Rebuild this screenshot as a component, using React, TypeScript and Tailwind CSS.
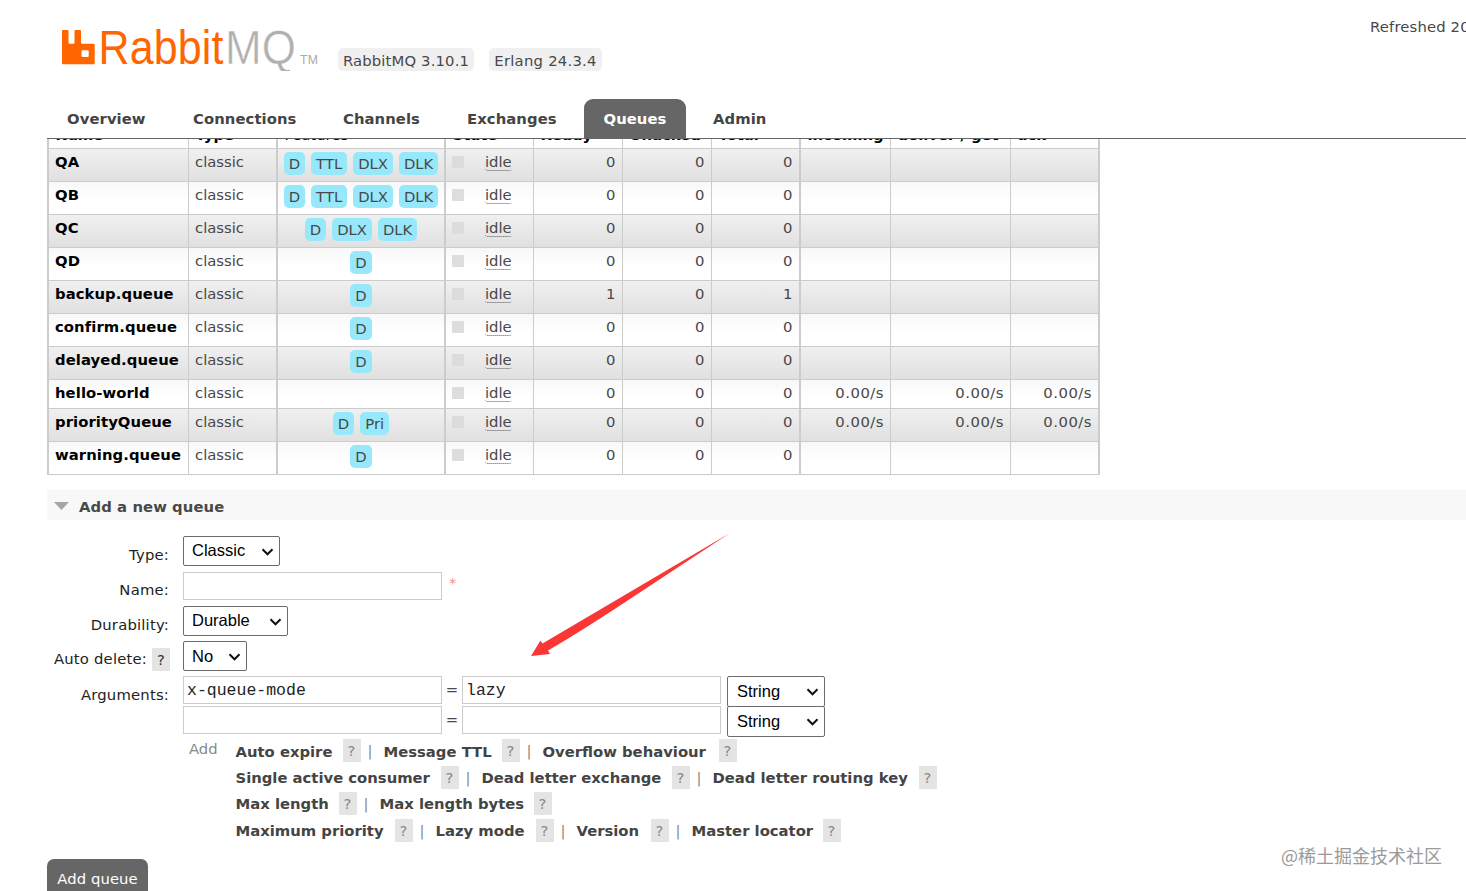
import React from "react";
import clsx from "clsx";

type Queue = { name: string; tags: string[]; ready: number; total: number; rates?: boolean; short?: boolean };

const queues: Queue[] = [
  { name: "QA", tags: ["D", "TTL", "DLX", "DLK"], ready: 0, total: 0 },
  { name: "QB", tags: ["D", "TTL", "DLX", "DLK"], ready: 0, total: 0 },
  { name: "QC", tags: ["D", "DLX", "DLK"], ready: 0, total: 0 },
  { name: "QD", tags: ["D"], ready: 0, total: 0 },
  { name: "backup.queue", tags: ["D"], ready: 1, total: 1 },
  { name: "confirm.queue", tags: ["D"], ready: 0, total: 0 },
  { name: "delayed.queue", tags: ["D"], ready: 0, total: 0 },
  { name: "hello-world", tags: [], ready: 0, total: 0, rates: true, short: true },
  { name: "priorityQueue", tags: ["D", "Pri"], ready: 0, total: 0, rates: true },
  { name: "warning.queue", tags: ["D"], ready: 0, total: 0 },
];

const columns = [
  { label: "Name", thick: true },
  { label: "Type" },
  { label: "Features", thick: true, plain: true },
  { label: "State", thick: true },
  { label: "Ready" },
  { label: "Unacked" },
  { label: "Total" },
  { label: "incoming", thick: true },
  { label: "deliver / get" },
  { label: "ack" },
];

const gridCols = "grid w-[1053px] grid-cols-[141px_88px_168px_89px_89px_89px_88px_91px_120px_90px]";

const options = [
  [
    { label: "Auto expire", w: "w-[107px]" },
    { label: "Message TTL", w: "w-[118px]" },
    { label: "Overflow behaviour", w: "w-[176px]" },
  ],
  [
    { label: "Single active consumer", w: "w-[205px]" },
    { label: "Dead letter exchange", w: "w-[190px]" },
    { label: "Dead letter routing key", w: "w-[206px]" },
  ],
  [
    { label: "Max length", w: "w-[103px]" },
    { label: "Max length bytes", w: "w-[154px]" },
  ],
  [
    { label: "Maximum priority", w: "w-[159px]" },
    { label: "Lazy mode", w: "w-[100px]" },
    { label: "Version", w: "w-[74px]" },
    { label: "Master locator", w: "w-[131px]" },
  ],
];

const tabs = [
  { label: "Overview", w: "w-[126px]" },
  { label: "Connections", w: "w-[150px]" },
  { label: "Channels", w: "w-[124px]" },
  { label: "Exchanges", w: "w-[137px]" },
  { label: "Queues", w: "w-[102px]", active: true },
  { label: "Admin", w: "w-[110px]" },
];

function Logo() {
  return (
    <svg width="262" height="46" viewBox="0 0 262 46" className="block">
      <path
        fill="#ff6600"
        d="M2 6a1 1 0 0 1 1-1h4.500a1 1 0 0 1 1 1v11.500a1.200 1.200 0 0 0 1.200 1.200h3.600a1.200 1.200 0 0 0 1.200-1.200V6a1 1 0 0 1 1-1h4.500a1 1 0 0 1 1 1v11.500a1.200 1.200 0 0 0 1.200 1.200H33.500a1.200 1.200 0 0 1 1.200 1.200V38a1.200 1.200 0 0 1-1.200 1.200H3.200A1.200 1.200 0 0 1 2 38zM22.500 25.300a1 1 0 0 0-1 1v4.800a1 1 0 0 0 1 1h5.200a1 1 0 0 0 1-1v-4.800a1 1 0 0 0-1-1z"
        fillRule="evenodd"
      />
      <g className="font-['Liberation_Sans',sans-serif]">
        <text x="38.500" y="39" fontSize="47.500" fill="#ff6600" textLength="125" lengthAdjust="spacingAndGlyphs">Rabbit</text>
        <text x="165" y="39" fontSize="48.500" fill="#b0b0b0" stroke="#ffffff" strokeWidth="0.500" textLength="71" lengthAdjust="spacingAndGlyphs">MQ</text>
        <text x="240" y="39" fontSize="12.500" fill="#aaaaaa" textLength="18" lengthAdjust="spacingAndGlyphs">TM</text>
      </g>
    </svg>
  );
}

function Select({ value, className }: { value: string; className: string }) {
  return (
    <div className={clsx("flex shrink-0 justify-between rounded-[2px] border border-[#6b6b6b] bg-white pr-[5px] font-['Liberation_Sans',sans-serif] text-[16.500px] text-black", className)}>
      <span>{value}</span>
      <svg width="13" height="8" viewBox="0 0 13 8" className="mt-[11px]">
        <path d="M1.500 1.300 6.500 6.300l5-5" fill="none" stroke="#111" strokeWidth="2" />
      </svg>
    </div>
  );
}

function Field({ value = "" }: { value?: string }) {
  return (
    <div className="h-7 w-[259px] shrink-0 border border-[#cccccc] bg-white pl-[3px] font-['Liberation_Mono',monospace] text-[16.500px] leading-[28px] text-[#222]">
      {value}
    </div>
  );
}

function Help({ dark = false }: { dark?: boolean }) {
  return (
    <span className={clsx("h-[23px] w-[18px] shrink-0 bg-[#e4e4e4] text-center", dark ? "leading-[23px] text-[#333]" : "leading-[24px] text-[#888]")}>?</span>
  );
}

function Label({ text, help = false }: { text: string; help?: boolean }) {
  return (
    <div className={clsx("flex w-[123px] shrink-0 justify-end gap-[5px] leading-[22px] tracking-[0.200px] text-[#222]", !help && "pr-px")}>
      <span className="whitespace-nowrap">{text}</span>
      {help && <Help dark />}
    </div>
  );
}

function QueueRow({ q, index }: { q: Queue; index: number }) {
  const cell = "border-[#cccccc] pt-1 leading-[18px]";
  const num = clsx(cell, "border-l pr-[6.500px] text-right");
  const rate = clsx(cell, "pr-1.5 text-right tracking-[0.500px]");
  return (
    <div
      className={clsx(
        gridCols,
        "border-b border-b-[#cccccc]",
        q.short ? "h-[29px]" : "h-[33px]",
        index % 2 === 0 ? "bg-linear-to-b from-[#f0f0f0] to-[#e0e0e0]" : "bg-linear-to-b from-[#f8f8f8] to-white to-60%"
      )}
    >
      <div className={clsx(cell, "border-l-2 pl-1.5 font-bold tracking-[0.080px] text-black")}>{q.name}</div>
      <div className={clsx(cell, "border-l pl-1.5")}>classic</div>
      <div className="flex justify-center gap-1.5 border-l-2 border-[#cccccc] pt-[3px]">
        {q.tags.map((t) => (
          <span key={t} className="h-[23px] rounded-[5px] bg-[#98e8fc] px-[5px] leading-[23px]">{t}</span>
        ))}
      </div>
      <div className={clsx(cell, "flex items-start border-l-2 pl-1.5")}>
        <span className={clsx("mt-[3px] h-3 w-3", index % 2 === 0 ? "bg-[#dcdcdc]" : "bg-[#dddddd]")} />
        <span className="ml-[21px] h-[18px] rounded-b-[3px] border-b border-dotted border-[#555]">idle</span>
      </div>
      <div className={num}>{q.ready}</div>
      <div className={num}>0</div>
      <div className={num}>{q.total}</div>
      <div className={clsx(rate, "border-l-2")}>{q.rates && "0.00/s"}</div>
      <div className={clsx(rate, "border-l")}>{q.rates && "0.00/s"}</div>
      <div className={clsx(rate, "border-r-2 border-l")}>{q.rates && "0.00/s"}</div>
    </div>
  );
}

export default function App() {
  return (
    <div className="relative flex h-[891px] w-[1466px] flex-col overflow-hidden bg-white pl-[47px] font-['DejaVu_Sans',Verdana,sans-serif] text-[14.800px] text-[#484848]">
      <header className="flex h-[99px] shrink-0 items-start tracking-[0.150px]">
        <div className="mt-[25px] ml-[13px] shrink-0"><Logo /></div>
        <span className="mt-[48px] ml-[16px] h-[23px] w-[136px] shrink-0 rounded-[5px] bg-[#f0f0f0] text-center leading-[25px] whitespace-nowrap">RabbitMQ 3.10.1</span>
        <span className="mt-[48px] ml-[15px] h-[23px] w-[113px] shrink-0 rounded-[5px] bg-[#f0f0f0] text-center leading-[25px] tracking-[0.250px] whitespace-nowrap">Erlang 24.3.4</span>
        <span className="mt-[17px] ml-[768px] shrink-0 leading-5 whitespace-nowrap">Refreshed 20</span>
      </header>

      <nav className="flex h-10 shrink-0 border-b border-[#666666] font-bold tracking-[0.080px] text-[#444]">
        {tabs.map((t) => (
          <div
            key={t.label}
            className={clsx("h-[39px] shrink-0 leading-[39px]", t.w, t.active ? "rounded-t-[9px] bg-[#666666] text-center text-white" : t.label === "Admin" ? "pl-[27px]" : "pl-5")}
          >
            {t.label}
          </div>
        ))}
      </nav>

      <section className="shrink-0 overflow-hidden">
        <div className={clsx(gridCols, "h-2.5 overflow-hidden border-b border-b-[#cccccc] font-bold text-black")}>
          {columns.map((c, i) => (
            <div
              key={c.label}
              className={clsx(
                "flex h-[9px] items-end border-[#cccccc] pl-[6.500px] leading-[18px] whitespace-nowrap",
                c.thick ? "border-l-2" : "border-l",
                c.plain && "font-normal",
                i === 9 && "border-r-2"
              )}
            >
              <span className="mb-1">{c.label}</span>
            </div>
          ))}
        </div>
        {queues.map((q, i) => (
          <QueueRow key={q.name} q={q} index={i} />
        ))}
      </section>

      <h2 className="mt-[15px] flex h-[30px] shrink-0 items-center bg-[#f8f8f8] pl-[7px] font-bold tracking-[0.080px]">
        <svg width="15" height="8" viewBox="0 0 15 8" className="mt-0.5"><path d="M0 0h15L7.500 8z" fill="#a5a5a5" /></svg>
        <span className="mt-[3.500px] ml-2.5">Add a new queue</span>
      </h2>

      <form className="mt-4 flex shrink-0 flex-col">
        <div className="flex h-[35px]">
          <div className="pt-2"><Label text="Type:" /></div>
          <Select value="Classic" className="ml-[13px] h-[30px] w-[97px] pl-2 leading-[26px]" />
        </div>
        <div className="flex h-[35px] pt-px">
          <div className="pt-[7px]"><Label text="Name:" /></div>
          <div className="ml-[13px] flex gap-[7px]">
            <Field />
            <span className="text-[#f0928c]">*</span>
          </div>
        </div>
        <div className="flex h-[35px]">
          <div className="pt-2"><Label text="Durability:" /></div>
          <Select value="Durable" className="ml-[13px] h-[30px] w-[105px] pl-2 leading-[26px]" />
        </div>
        <div className="flex h-[35px]">
          <div className="pt-[7px]"><Label text="Auto delete:" help /></div>
          <Select value="No" className="ml-[13px] h-[30px] w-[64px] pl-2 leading-[28px]" />
        </div>
        <div className="flex">
          <div className="h-[35px] pt-2"><Label text="Arguments:" /></div>
          <div className="ml-[13px]">
            <div className="flex h-[30px]">
              <Field value="x-queue-mode" />
              <span className="w-5 text-center leading-7">=</span>
              <Field value="lazy" />
              <Select value="String" className="ml-1.5 h-[31px] w-[98px] pl-[9px] leading-[28px]" />
            </div>
            <div className="flex h-[32px]">
              <Field />
              <span className="w-5 text-center leading-7">=</span>
              <Field />
              <Select value="String" className="ml-1.5 h-[31px] w-[98px] pl-[9px] leading-[28px]" />
            </div>
            <div className="flex">
              <span className="w-[52.500px] pl-1.5 text-[#888]">Add</span>
              <div className="flex flex-col pt-px">
                {options.map((line, r) => (
                  <div key={r} className="flex h-[26.700px] text-[#888]">
                    {line.map((o, i) => (
                      <React.Fragment key={o.label}>
                        <b className={clsx("shrink-0 whitespace-nowrap text-[#444]", r === 0 ? "leading-[25px]" : "leading-[24px]", o.w)}>{o.label}</b>
                        <Help />
                        {i < line.length - 1 && <span className="w-[23px] pl-[7px] leading-[24px]">|</span>}
                      </React.Fragment>
                    ))}
                  </div>
                ))}
              </div>
            </div>
          </div>
        </div>
      </form>

      <button className="mt-[13.200px] h-10 w-[101px] shrink-0 rounded-[7px] bg-[#666666] tracking-[0.100px] text-white">Add queue</button>

      <svg className="absolute top-[530px] left-[525px]" width="210" height="132" viewBox="0 0 210 132">
        <path d="M205 3 17.500 113.500 15.500 110.500 6 126l19-2-2-3.500Q60 99 114 63Z" fill="#fa3636" />
      </svg>
      <div className="absolute top-[841px] left-[1281px] font-['Noto_Sans_CJK_SC',sans-serif] text-[18px] leading-7 font-normal whitespace-nowrap text-[#9a9a9a]">@稀土掘金技术社区</div>
    </div>
  );
}
